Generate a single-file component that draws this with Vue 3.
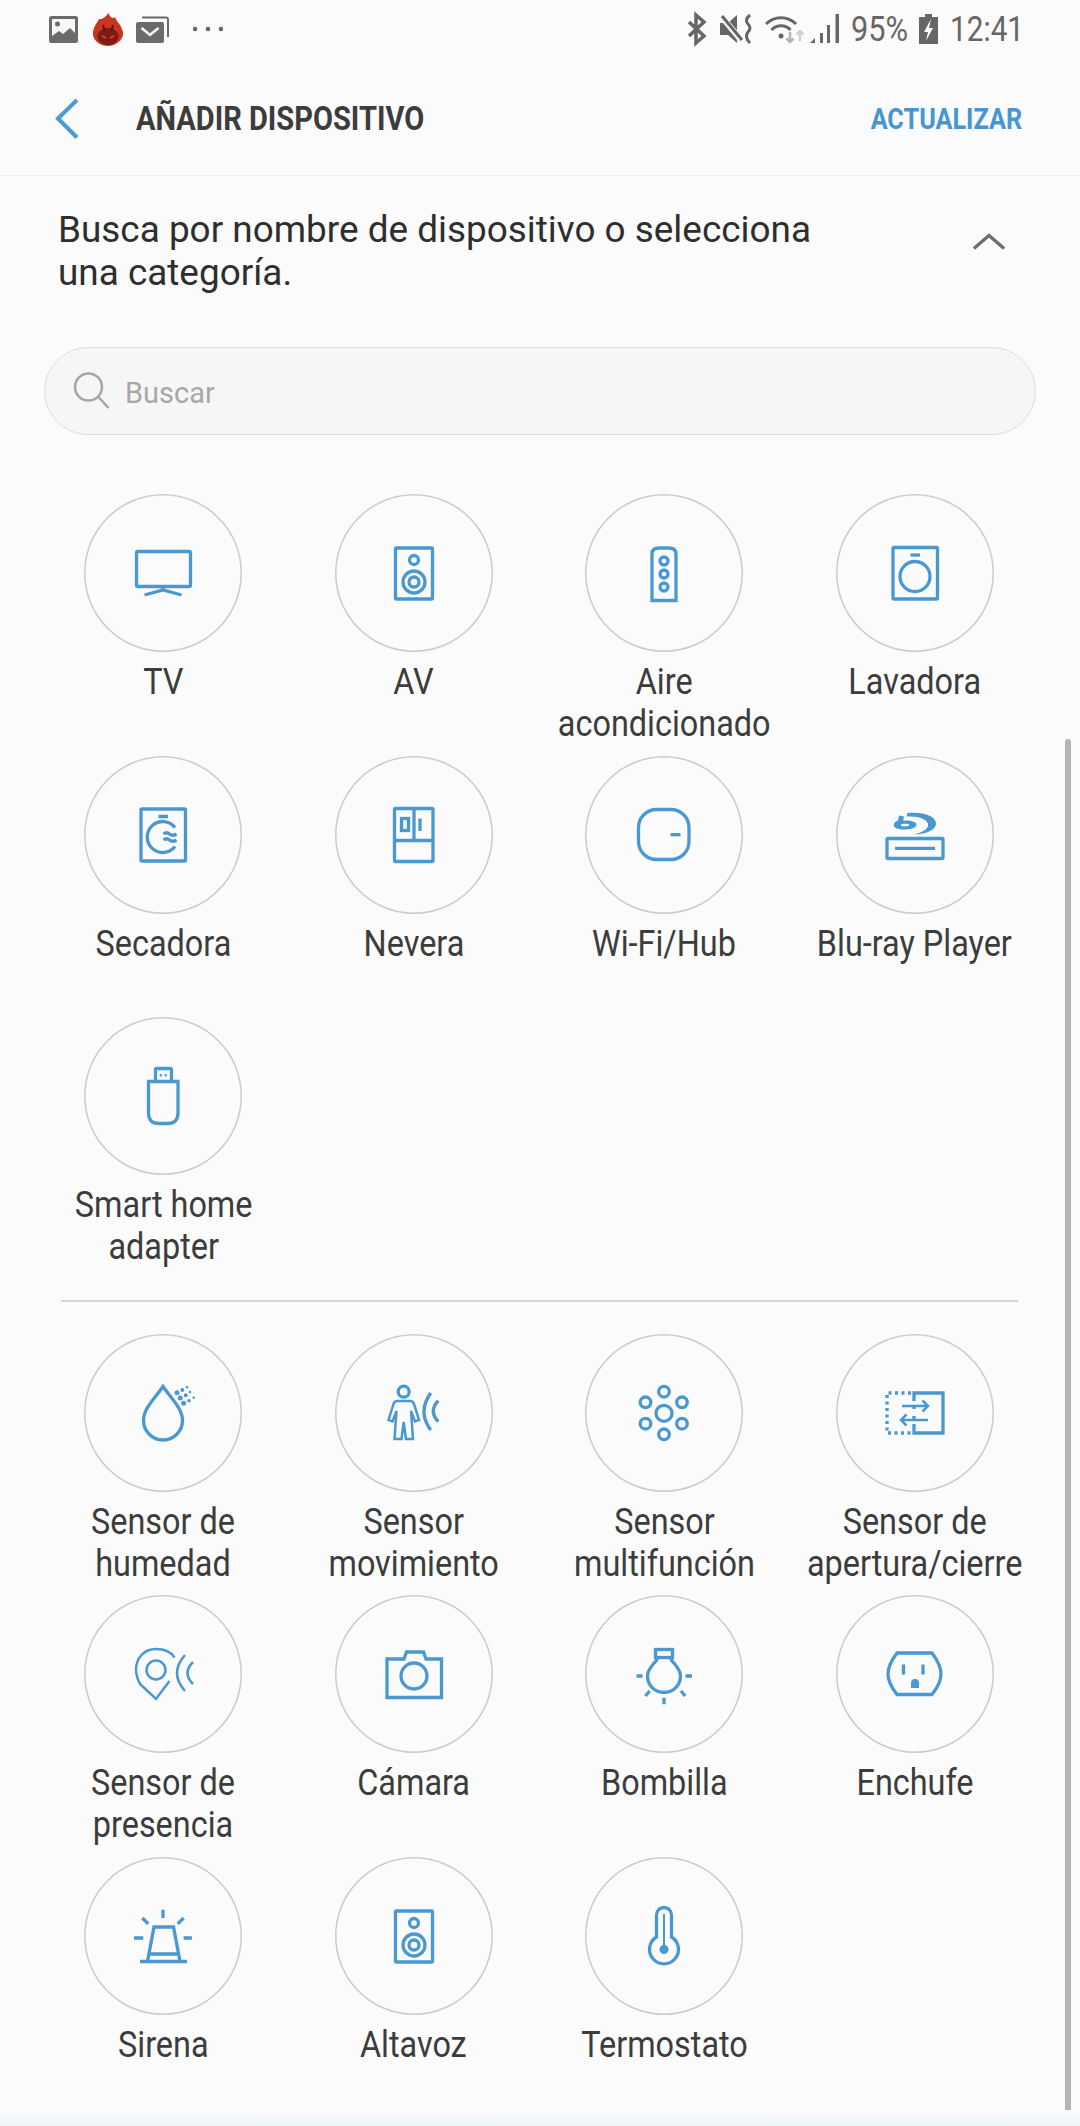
<script setup>
const icons = {
  tv: '<rect x="52.500" y="57.500" width="54" height="35" rx="1.500"/><path d="M79 92v4M60.500 101L79 96l18.500 5"/>',
  av: '<rect x="60.500" y="54" width="37" height="51" rx="1"/><circle cx="79" cy="66" r="4.500"/><circle cx="79" cy="88" r="11"/><circle cx="79" cy="88" r="5"/>',
  air: '<path d="M67 106.500V60q0-6 7-6h10q7 0 7 6v46.500z"/><circle cx="79" cy="67" r="4"/><circle cx="79" cy="80" r="4"/><circle cx="79" cy="93" r="4"/>',
  washer: '<rect x="57" y="53.500" width="44.500" height="51.500" rx="1"/><path d="M74.500 61h9.500"/><circle cx="79" cy="82.500" r="15"/>',
  dryer: '<rect x="57" y="53" width="44.500" height="52" rx="1"/><path d="M74.500 60.500h9.500M91 71.500a15.500 15.500 0 1 0 0 19"/><path d="M79.500 78q3-2.500 6 0t7 0M79.500 84q3-2.500 6 0t7 0"/>',
  fridge: '<rect x="59.500" y="52.500" width="38.500" height="53" rx="1"/><path d="M59.500 84.500h38.500M79 52.500v32M85 62.500V75"/><rect x="66.500" y="62.500" width="7" height="12"/>',
  hub: '<rect x="53.500" y="53.500" width="50.500" height="50" rx="18"/><path d="M85.500 78.700h10"/>',
  bluray: '<rect x="51" y="82.500" width="56" height="20" rx="1"/><path d="M59 92.300h40"/><path fill="#4a98d2" stroke="none" d="M71 57C90 55.500 100 61 100 67.500 100 73.500 92 78 77 78.500 87 76.500 93 72.500 92 68 91 63.500 84 60 71 60.500zM63 59.500l5 1-.8 4C75 64 81 66 80.500 69 80 72.500 72 74 66 73.500 60 73 57 71 58 68c.6-2 2.500-3 4-3.500zM66 68c-1.500.5-1.500 2 .5 2.300 3 .4 7-.2 7-1.300 0-1.300-5-1.700-7.500-1z"/>',
  usb: '<path d="M64.500 64.500h29.500V96q0 10.500-10.500 10.500h-8.500Q64.500 106.500 64.500 96z"/><path d="M71.500 64.500V53q0-1.500 1.500-1.500h13q1.500 0 1.500 1.500v11.500"/><path d="M76.700 57v2.500M81.700 57v2.500" stroke-width="2"/>',
  drop: '<path d="M79 52.500C72 63 59.500 74 59.500 86.500a19.500 19.500 0 0 0 39 0C98.500 74 86 63 79 52.500z"/><g fill="#4a98d2" stroke="none"><circle cx="93" cy="58.700" r="2.500"/><circle cx="98.300" cy="56" r="2"/><circle cx="103" cy="53.300" r="1.300"/><circle cx="96.300" cy="64" r="2.500"/><circle cx="101.700" cy="61.300" r="2"/><circle cx="106" cy="58" r="1.300"/><circle cx="99.700" cy="69.300" r="2.500"/><circle cx="105" cy="66.700" r="1.800"/><circle cx="109.700" cy="63.700" r="1.200"/></g>',
  motion: '<circle cx="68.700" cy="57.700" r="5.500"/><path stroke-width="2.500" d="M62 67h13.500q2.500 0 3.500 3l5 16-4 1.500-4-10.500 2 28h-7l-2.300-17-2.200 17h-7l2-28-4 10.500-4-1.500 5-16q1-3 3.500-3z"/><path d="M95.700 59q-13.500 19 0 37M103.300 66.700q-10 10.500 0 21"/>',
  multi: '<circle cx="79" cy="79.300" r="8"/><circle cx="79" cy="57.700" r="5.300"/><circle cx="79" cy="100.300" r="5.300"/><circle cx="60.500" cy="68.300" r="5.300"/><circle cx="97" cy="68.300" r="5.300"/><circle cx="60.500" cy="89.700" r="5.300"/><circle cx="97" cy="89.700" r="5.300"/>',
  door: '<path d="M78 67V59h29v40H78V90"/><path d="M78 73v2M78 82v3"/><path stroke-dasharray="3 3.500" d="M75 59H51v40h24"/><path stroke-width="2.500" d="M66 72h26M86.500 66.500L92 72l-5.500 5.500M92 86H65M70.500 80.500L65 86l5.500 5.500"/>',
  presence: '<path d="M90.500 62.500C87 57 80 54 72 54 60 54 52 63 52 75c0 5 2 10 4 14l16 15 13.500-18" stroke-width="2.500"/><circle cx="72" cy="75" r="9.500" stroke-width="2.500"/><path d="M101 60q-16 18 0 36M109 67q-11 11 0 22" stroke-width="2.500"/>',
  camera: '<path d="M52 102.500V64h17l2.500-7h17l2.500 7h15.500v38.500z"/><circle cx="79" cy="81" r="13"/>',
  bulb: '<rect x="70.500" y="54.500" width="17" height="8"/><path d="M72 62.500v2C68 70 62.500 74 62.500 81c0 9 7 16.500 16.500 16.500S95.500 90 95.500 81c0-7-5.500-11-9.500-16.500v-2"/><path d="M51.500 81h6M100.500 81h6.500M64.700 96l-4.300 5M95.900 96l4.300 5M79 102.700v6.600"/>',
  outlet: '<path d="M61 58h35c6 8 9 14 9 21s-3 13-9 20.500H61C55 92 52 86 52 79s3-13 9-21z"/><path d="M67.500 69.500v10M87 69.500v10"/><path fill="#4a98d2" stroke="none" d="M75 93v-5q0-4 4-4t4 4v5z"/>',
  siren: '<path d="M56 104.500h47M63.500 104.500l6.500-34.500h19.500l6.500 34.500M65 97h29M79 52.700V61M58.300 61l6 5.700M99.700 61l-6 5.700M50 81h9.200M99.600 81h8.300"/>',
  thermo: '<path d="M71.500 80V58a7.500 7.500 0 0 1 15 0v22a14.500 14.500 0 1 1-15 0z"/><path d="M79 57v35" stroke-width="2"/><circle cx="79" cy="92.500" r="4.500" fill="#4a98d2" stroke="none"/>'
}

const topRows = [
  { icon: 'tv', lines: ['TV'] },
  { icon: 'av', lines: ['AV'] },
  { icon: 'air', lines: ['Aire', 'acondicionado'] },
  { icon: 'washer', lines: ['Lavadora'] },
  { icon: 'dryer', lines: ['Secadora'] },
  { icon: 'fridge', lines: ['Nevera'] },
  { icon: 'hub', lines: ['Wi-Fi/Hub'] },
  { icon: 'bluray', lines: ['Blu-ray Player'] },
  { icon: 'usb', lines: ['Smart home', 'adapter'] }
]
const bottomRows = [
  { icon: 'drop', lines: ['Sensor de', 'humedad'] },
  { icon: 'motion', lines: ['Sensor', 'movimiento'] },
  { icon: 'multi', lines: ['Sensor', 'multifunción'] },
  { icon: 'door', lines: ['Sensor de', 'apertura/cierre'] },
  { icon: 'presence', lines: ['Sensor de', 'presencia'] },
  { icon: 'camera', lines: ['Cámara'] },
  { icon: 'bulb', lines: ['Bombilla'] },
  { icon: 'outlet', lines: ['Enchufe'] },
  { icon: 'siren', lines: ['Sirena'] },
  { icon: 'av', lines: ['Altavoz'] },
  { icon: 'thermo', lines: ['Termostato'] }
]
</script>

<template>
  <div class="screen">
    <div class="status">
      <div class="status-left">
        <svg class="si" width="29" height="58" viewBox="48 0 29 58">
          <rect x="48" y="16" width="29" height="27" rx="2.500" fill="#6b6b6b"/>
          <path d="M51 19h23v14l-5-5-7 6-4-3-7 5z" fill="#f7f7f7"/>
          <circle cx="56.500" cy="24" r="2.500" fill="#6b6b6b"/>
        </svg>
        <svg class="si flame" width="31" height="58" viewBox="90 0 31 58">
          <path d="M105.500 13c1.500 5 4.500 6 6.500 4 1 4 6 7 8 15 1 8-7 14-15 14s-16-6-15-14c1-6 4-9 6-13 2 1 6-1 9.500-6z" fill="#cb3322"/>
          <path d="M94 36c2-6 7-8 11-8s9 2 11 8c-1 6-6 9-11 9s-10-3-11-9z" fill="#7d1c16"/>
          <path d="M100 25l1.500 6M110 25l-1.500 6" stroke="#5d1410" stroke-width="2" fill="none"/>
          <path d="M99 36l4 2M111 36l-4 2" stroke="#d8473a" stroke-width="1.500" fill="none"/>
        </svg>
        <svg class="si mail" width="34" height="58" viewBox="132 0 34 58">
          <path d="M138 17.500h24q2 0 2 2V37" fill="none" stroke="#6b6b6b" stroke-width="2"/>
          <rect x="132" y="22" width="28" height="21" rx="2" fill="#6b6b6b"/>
          <path d="M137.500 28l8.500 7 8.500-7" fill="none" stroke="#fbfbfb" stroke-width="2.500"/>
        </svg>
        <svg class="si dots" width="30" height="58" viewBox="188 0 30 58" fill="#666">
          <circle cx="190" cy="29" r="2.300"/><circle cx="203" cy="29" r="2.300"/><circle cx="216" cy="29" r="2.300"/>
        </svg>
      </div>
      <div class="status-right">
        <svg class="si" width="20" height="58" viewBox="688 0 20 58" fill="none" stroke="#666" stroke-width="3.500">
          <path d="M690 22l15 14-8 7V15l8 7-15 14"/>
        </svg>
        <svg class="si gap13" width="33" height="58" viewBox="721 0 33 58">
          <path d="M721 23h8l9-8v28l-9-8h-8z" fill="#666"/>
          <path d="M722 16l21 25" stroke="#fbfbfb" stroke-width="6"/>
          <path d="M723 16l20 24" stroke="#666" stroke-width="3"/>
          <path d="M751 15q-6 5-2 9t0 8q-4 5 2 11" fill="none" stroke="#666" stroke-width="3"/>
        </svg>
        <svg class="si gap11" width="40" height="58" viewBox="765 0 40 58" fill="none">
          <path d="M766 24a21 21 0 0 1 30 0" stroke="#666" stroke-width="3"/>
          <path d="M771.500 30a13 13 0 0 1 19 0" stroke="#666" stroke-width="3"/>
          <circle cx="781" cy="36" r="2.500" fill="#666"/>
          <path d="M790 32v10M786.500 38.500l3.500 3.500 3.500-3.500" stroke="#b5b5b5" stroke-width="2.500"/>
          <path d="M800 41V31M796.500 34.500L800 31l3.500 3.500" stroke="#d0d0d0" stroke-width="2.500"/>
        </svg>
        <svg class="si gap5" width="29" height="58" viewBox="810 0 29 58" fill="#666">
          <path d="M810 43l5-5v5z"/><rect x="820" y="33" width="3" height="10"/><rect x="827" y="25" width="3" height="18"/><rect x="835.500" y="14" width="3.500" height="29"/>
        </svg>
        <span class="stxt pct">95%</span>
        <svg class="si batt" width="19" height="58" viewBox="919 0 19 58">
          <path d="M925 14h7v3h6v27h-19V17h6z" fill="#666"/>
          <path d="M931 19l-7 13h4l-2 9 7-13h-4z" fill="#fbfbfb"/>
        </svg>
        <span class="stxt clock">12:41</span>
      </div>
    </div>

    <header class="toolbar">
      <svg class="back" width="24" height="42" viewBox="0 0 24 42" fill="none" stroke="#4a9ad8" stroke-width="4">
        <path d="M22 2L3 20.500 22 39.500"/>
      </svg>
      <h1 class="title">AÑADIR DISPOSITIVO</h1>
      <button class="refresh">ACTUALIZAR</button>
    </header>

    <main class="body">
      <div class="intro">
        <p class="intro-text">Busca por nombre de dispositivo o selecciona<br>una categoría.</p>
        <svg class="chev" width="34" height="20" viewBox="0 0 36 20" fill="none" stroke="#6e6e6e" stroke-width="3.500">
          <path d="M2 17L18 3l16 14"/>
        </svg>
      </div>

      <div class="search">
        <svg width="37" height="38" viewBox="0 0 36 38" fill="none" stroke="#a6a6a6" stroke-width="2.500">
          <circle cx="15" cy="15" r="13.500"/><path d="M25 25l10 11"/>
        </svg>
        <span class="search-text">Buscar</span>
      </div>

      <section class="grid">
        <div v-for="item in topRows" :key="item.icon" class="cell">
          <div class="circle">
            <svg width="158" height="158" viewBox="0 0 158 158" fill="none" stroke="#4a98d2" stroke-width="3.300" v-html="icons[item.icon]"></svg>
          </div>
          <div class="label"><div v-for="l in item.lines" :key="l">{{ l }}</div></div>
        </div>
      </section>

      <hr class="divider">

      <section class="grid">
        <div v-for="item in bottomRows" :key="item.lines.join()" class="cell">
          <div class="circle">
            <svg width="158" height="158" viewBox="0 0 158 158" fill="none" stroke="#4a98d2" stroke-width="3.300" v-html="icons[item.icon]"></svg>
          </div>
          <div class="label"><div v-for="l in item.lines" :key="l">{{ l }}</div></div>
        </div>
      </section>
    </main>

    <div class="scrollbar"></div>
    <div class="bottom-fade"></div>
  </div>
</template>

<style>
html, body { margin: 0; background: #fbfbfb; }
</style>

<style scoped>
.screen {
  position: relative;
  width: 1080px;
  height: 2126px;
  overflow: hidden;
  background: #fbfbfb;
  font-family: Roboto, "Liberation Sans", sans-serif;
  color: #3a3a3a;
}
.status {
  display: flex;
  justify-content: space-between;
  height: 58px;
  padding: 0 57px 0 49px;
}
.status-left, .status-right { display: flex; align-items: flex-start; }
.si { display: block; flex: none; }
.flame { margin-left: 15px; }
.mail { margin-left: 12px; }
.dots { margin-left: 22.500px; }
.gap13 { margin-left: 13px; }
.gap11 { margin-left: 12px; }
.gap5 { margin-left: 5px; }
.batt { margin-left: 11px; }
.stxt {
  display: block;
  font-size: 35px;
  line-height: 60px;
  color: #666;
  white-space: nowrap;
  transform-origin: left center;
}
.pct { width: 57px; margin-left: 12px; transform: scaleX(.88); }
.clock { width: 73px; margin-left: 12px; transform: scaleX(.85); }

.toolbar {
  display: flex;
  align-items: center;
  height: 118px;
  box-sizing: border-box;
  border-bottom: 1px solid #efefef;
  padding: 4px 58px 0 55px;
}
.back { flex: none; }
.title {
  margin: 0 0 0 57px;
  font-size: 33px;
  font-weight: 700;
  color: #3c3c3c;
  white-space: nowrap;
  transform: scaleX(.88);
  transform-origin: left center;
}
.refresh {
  margin-left: auto;
  padding: 0;
  border: 0;
  background: none;
  font: 700 29px Roboto, sans-serif;
  color: #4696d3;
  white-space: nowrap;
  transform: scaleX(.87);
  transform-origin: right center;
}
.body { padding: 0 38px; }
.intro {
  display: flex;
  justify-content: space-between;
  padding: 32px 36px 0 20px;
}
.intro-text {
  margin: 0;
  font-size: 36.900px;
  line-height: 43px;
  color: #2e2e2e;
  white-space: nowrap;
}
.chev { margin-top: 24px; }
.search {
  display: flex;
  align-items: center;
  gap: 15px;
  box-sizing: border-box;
  width: 992px;
  height: 88px;
  margin: 53px 0 0 6px;
  padding: 0 0 0 28px;
  border: 1px solid #dedede;
  border-radius: 44px;
  background: #f6f6f6;
}
.search-text { font-size: 29px; color: #a8a8a8; position: relative; top: 2px; }
.grid {
  display: grid;
  grid-template-columns: repeat(4, 250.500px);
  grid-auto-rows: 261.500px;
  margin-top: 59px;
}
.divider + .grid { margin-top: 0; }
.cell { display: flex; flex-direction: column; align-items: center; }
.circle {
  box-sizing: border-box;
  width: 158px;
  height: 158px;
  flex: none;
  border-radius: 50%;
  box-shadow: inset 0 0 0 1.500px #cbcbcb;
}
.circle svg { display: block; }
.label {
  margin-top: 9px;
  font-size: 36px;
  line-height: 42px;
  text-align: center;
  color: #3c3c3c;
  white-space: nowrap;
  transform: scaleX(.9);
}
.divider {
  height: 2px;
  margin: 21px 24px 32px 23px;
  border: 0;
  background: #d4d4d4;
}
.scrollbar {
  position: absolute;
  right: 9px;
  top: 739px;
  width: 6px;
  height: 1378px;
  border-radius: 3px;
  background: #b4b4b4;
}
.bottom-fade {
  position: absolute;
  left: 0;
  right: 0;
  bottom: 0;
  height: 16px;
  background: linear-gradient(#fbfbfb, #eef5f6);
}
</style>
